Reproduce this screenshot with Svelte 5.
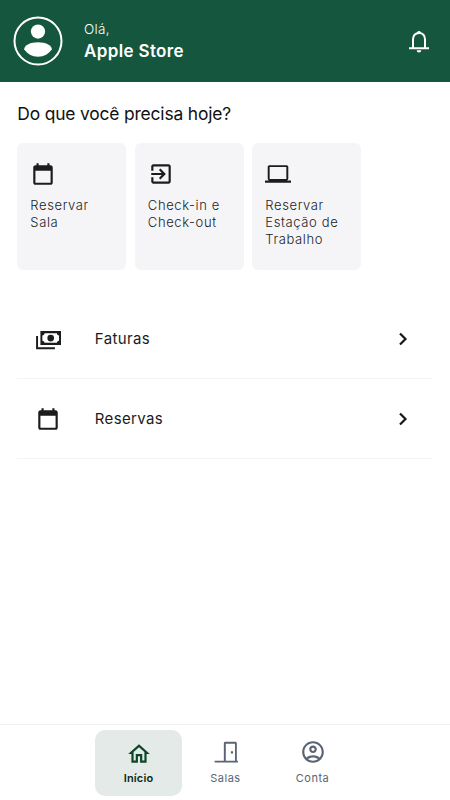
<script>
  const calendar = 'M19 4h-1V2h-2v2H8V2H6v2H5c-1.1 0-2 .9-2 2v14c0 1.1.9 2 2 2h14c1.1 0 2-.9 2-2V6c0-1.1-.9-2-2-2zm0 16H5V9h14v11z'

  const actions = [
    { label: 'Reservar Sala', icon: calendar },
    {
      label: 'Check-in e Check-out',
      icon: 'M10.09 15.59L11.5 17l5-5-5-5-1.41 1.41L12.67 11H3v2h9.67l-2.58 2.59zM19 3H5c-1.11 0-2 .9-2 2v4h2V5h14v14H5v-4H3v4c0 1.1.89 2 2 2h14c1.1 0 2-.9 2-2V5c0-1.1-.9-2-2-2z'
    },
    {
      label: 'Reservar Estação de Trabalho',
      icon: 'M20 18c1.1 0 1.5-.9 1.5-2V5.5c0-.8-.7-1.5-1.5-1.500H4c-.8 0-1.5.7-1.5 1.5V16c0 1.1.4 2 1.5 2H0v2h24v-2h-4zM4.300 5.500h15.400v11H4.300v-11z'
    }
  ]

  const links = [
    {
      label: 'Faturas',
      icon: 'M1 9.300h1.800v10.400h15.600v1.700H1V9.300zM5 4.700h19v12.800H5V4.700zm3.800 2c0 1.100-.9 2-2 2v4.800c1.100 0 2 .9 2 2h11.400c0-1.100.9-2 2-2V8.700c-1.100 0-2-.9-2-2H8.800zm5.700 1.300a3.100 3.100 0 1 1 0 6.200a3.100 3.100 0 0 1 0-6.200z'
    },
    { label: 'Reservas', icon: calendar }
  ]

  let active = $state('Início')
</script>

<header>
  <svg class="avatar" viewBox="0 0 50 50">
    <circle cx="25" cy="25" r="23.5" fill="none" stroke="#fff" stroke-width="2" />
    <circle cx="25" cy="15.6" r="7.1" fill="#fff" />
    <path d="M11.2 33.300c0-4.200 6.400-7 13.800-7s13.800 2.800 13.800 7c-2.800 4.400-7.800 7.500-13.800 7.500s-11-3.100-13.800-7.500z" fill="#fff" />
  </svg>
  <div class="greeting">
    <span>Olá,</span>
    <strong>Apple Store</strong>
  </div>
  <svg class="bell" viewBox="0 0 24 26">
    <path d="M6 20.200v-8.700c0-3.800 2.300-6.600 6-6.600s6 2.800 6 6.600v8.700" fill="none" stroke="#fff" stroke-width="2" />
    <path d="M2 19.200h20v2H2zM10 5a2 2 0 1 1 4 0zM9.700 22.300h4.600a2.300 2.300 0 0 1-4.600 0z" fill="#fff" />
  </svg>
</header>

<main>
  <h1>Do que você precisa hoje?</h1>
  <div class="cards">
    {#each actions as action}
      <button class="card">
        <svg viewBox="0 0 24 24"><path d={action.icon} /></svg>
        <span>{action.label}</span>
      </button>
    {/each}
  </div>

  <div class="links">
    {#each links as link}
      <button class="link">
        <svg class="link-icon" viewBox="0 0 24 24"><path d={link.icon} fill-rule="evenodd" /></svg>
        <span>{link.label}</span>
        <svg class="chevron" viewBox="0 0 12 14"><path d="M3 1.5l5.500 5.500L3 12.500" /></svg>
      </button>
    {/each}
  </div>
</main>

<nav>
  <button class="tab" class:active={active === 'Início'} onclick={() => (active = 'Início')}>
    <svg viewBox="0 0 24 24">
      <path d="M12 3L2 12h3v8h6v-6h2v6h6v-8h3L12 3zm5 15h-2v-6H9v6H7v-7.810l5-4.500 5 4.500V18z" />
    </svg>
    <span>Início</span>
  </button>
  <button class="tab" class:active={active === 'Salas'} onclick={() => (active = 'Salas')}>
    <svg viewBox="0 0 24 24">
      <path d="M1.500 20H10V4c0-.9.6-1.500 1.500-1.500h9c.9 0 1.500.6 1.500 1.500v16h1v1.800H1.500V20zm10.300 0h8.500V4.300h-8.500V20zm4.700-8.700h2v2h-2v-2z" fill-rule="evenodd" />
    </svg>
    <span>Salas</span>
  </button>
  <button class="tab" class:active={active === 'Conta'} onclick={() => (active = 'Conta')}>
    <svg viewBox="0 0 24 24">
      <path d="M12 2C6.480 2 2 6.480 2 12s4.480 10 10 10 10-4.480 10-10S17.520 2 12 2zM7.350 18.500C8.660 17.560 10.260 17 12 17s3.340.56 4.650 1.500C15.340 19.440 13.740 20 12 20s-3.340-.56-4.650-1.500zm10.790-1.380C16.450 15.800 14.320 15 12 15s-4.450.8-6.140 2.120C4.700 15.730 4 13.950 4 12c0-4.420 3.580-8 8-8s8 3.580 8 8c0 1.950-.7 3.730-1.860 5.120z" />
      <path d="M12 6c-1.930 0-3.500 1.570-3.500 3.500S10.070 13 12 13s3.500-1.570 3.500-3.500S13.930 6 12 6zm0 5c-.83 0-1.500-.67-1.500-1.500S11.170 8 12 8s1.500.67 1.500 1.500S12.830 11 12 11z" />
    </svg>
    <span>Conta</span>
  </button>
</nav>

<style>
  :global(body) {
    background-color: #fff;
  }
  :global(#app) {
    display: flex;
    flex-direction: column;
    height: 100vh;
    font-family: Inter, sans-serif;
    color: #1a1c1e;
  }

  header {
    display: flex;
    align-items: center;
    flex-shrink: 0;
    box-sizing: border-box;
    height: 82px;
    padding: 0 19px 0 12.5px;
    background-color: #15573e;
    color: #fff;
  }
  .avatar {
    width: 50px;
    height: 50px;
  }
  .greeting {
    display: flex;
    flex-direction: column;
    flex: 1;
    margin-left: 21.5px;
  }
  .greeting span {
    font-size: 13.5px;
    font-weight: 300;
    line-height: 20px;
    letter-spacing: .3px;
  }
  .greeting strong {
    font-size: 17px;
    font-weight: 600;
    line-height: 24px;
    letter-spacing: .35px;
  }
  .bell {
    width: 24px;
    height: 26px;
  }

  main {
    flex: 1;
    padding: 20px 17px 0 17.3px;
  }
  h1 {
    margin: 0;
    font-size: 17.4px;
    font-weight: 400;
    line-height: 23px;
    letter-spacing: -.16px;
    color: #111;
  }
  button {
    border: none;
    background: none;
    font-family: inherit;
    color: inherit;
    cursor: pointer;
  }
  svg {
    flex-shrink: 0;
    fill: currentColor;
  }

  .cards {
    display: flex;
    gap: 8.5px;
    margin-top: 18.3px;
  }
  .card {
    display: flex;
    flex-direction: column;
    align-items: flex-start;
    width: 109px;
    height: 126.5px;
    padding: 17.7px 12px 0 13px;
    border-radius: 6px;
    background-color: #f5f5f8;
    text-align: left;
  }
  .card svg {
    width: 26px;
    height: 26px;
  }
  .card span {
    margin-top: 9.7px;
    font-size: 13px;
    font-weight: 300;
    line-height: 17.4px;
    letter-spacing: .62px;
  }

  .links {
    margin-top: 29.7px;
  }
  .link {
    display: flex;
    align-items: center;
    width: 100%;
    height: 79.7px;
    padding: 0 24.5px 0 17.5px;
    border-bottom: 1px solid #f4f4f5;
    text-align: left;
  }
  .link span {
    flex: 1;
    margin-left: 34px;
    font-size: 15px;
    letter-spacing: .36px;
  }
  .link-icon {
    width: 26px;
    height: 26px;
  }
  .chevron {
    width: 12px;
    height: 14px;
    fill: none;
    stroke: #16181b;
    stroke-width: 2.2;
  }

  nav {
    display: flex;
    justify-content: center;
    flex-shrink: 0;
    box-sizing: border-box;
    height: 76px;
    padding-top: 5px;
    border-top: 1px solid #f0f1f2;
  }
  .tab {
    display: flex;
    flex-direction: column;
    align-items: center;
    width: 87px;
    height: 66px;
    padding: 9px 0 0 1px;
    border-radius: 10px;
    color: #5a6474;
  }
  .tab svg {
    width: 26px;
    height: 26px;
  }
  .tab span {
    margin-top: 5px;
    font-size: 11px;
    line-height: 16px;
    letter-spacing: .5px;
  }
  .tab.active {
    padding-top: 11px;
    background-color: #e3eae7;
    color: #0c4528;
  }
  .tab.active span {
    margin-top: 3px;
    color: #082b19;
    font-weight: 600;
    letter-spacing: .15px;
  }
</style>
